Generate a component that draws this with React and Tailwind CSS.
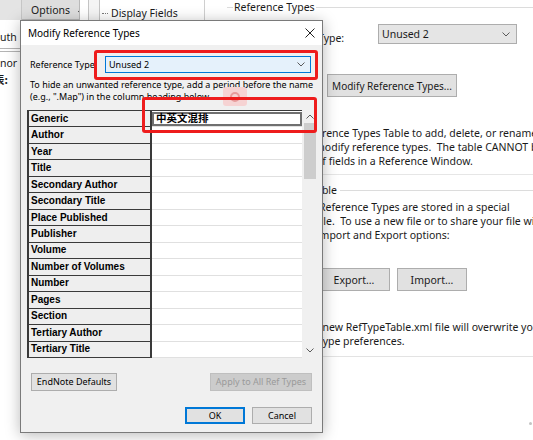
import React from 'react';

const fields = [
  'Generic', 'Author', 'Year', 'Title', 'Secondary Author', 'Secondary Title',
  'Place Published', 'Publisher', 'Volume', 'Number of Volumes', 'Number',
  'Pages', 'Section', 'Tertiary Author', 'Tertiary Title',
];

function Chevron({ up = false }) {
  return (
    <svg width="8" height="5" viewBox="0 0 8 5" className="shrink-0">
      <polyline
        points={up ? '0.5,4.5 4,1 7.5,4.5' : '0.5,0.5 4,4 7.5,0.5'}
        fill="none"
        stroke="#5a5a5a"
        strokeWidth="1"
      />
    </svg>
  );
}

function LeftPane() {
  return (
    <div className="w-[222px] shrink-0 flex flex-col">
      {/* toolbar strip above the dialog */}
      <div className="flex h-[20px]">
        <div className="w-[22px] bg-[#e4e4e4] border-r border-[#c6c6c6]" />
        <div className="w-[58px] h-[20px] bg-[#dedede] border-r border-b border-[#b9b9b9] flex items-center pl-[9px] pt-[3px] text-[10.5px]">
          <span>Options</span>
          <svg width="4" height="7" viewBox="0 0 4 7" className="ml-[8px]">
            <polygon points="0,0 4,3.5 0,7" fill="#111" />
          </svg>
        </div>
        <div className="w-[8px]" />
        <div className="w-[12px] border-x border-[#c4c4c4] bg-[#f4f4f4]" />
        <div className="w-[105px] flex items-center pl-[2px] pt-[6px] border-r border-[#cfcfcf]">
          <span className="w-[6px] border-t border-dotted border-[#7a7a7a]" />
          <span className="ml-[3px] text-[10.5px] leading-none">Display Fields</span>
        </div>
      </div>
      {/* bits of the page left of the dialog */}
      <div className="text-[10.5px] leading-[14px] whitespace-nowrap">
        <div className="mt-[10px]">uth</div>
        <div className="mt-[4px] w-[22px] h-[4px] border-y border-[#b4b4b4]" />
        <div className="mt-[4px]">nor</div>
        <div className="mt-[3px] -ml-[6px] font-bold font-['Noto_Sans_CJK_SC',sans-serif]">表:</div>
      </div>
    </div>
  );
}

function RightPane() {
  return (
    <div className="flex-1 flex flex-col text-[10.5px] leading-[14px] whitespace-pre overflow-hidden">
      {/* group box title */}
      <div className="flex items-center h-[14px] pl-[5px]">
        <span className="w-[6px] h-px bg-[#dcdcdc]" />
        <span className="px-[1px]">Reference Types</span>
        <span className="flex-1 h-px bg-[#dcdcdc]" />
      </div>

      <div className="flex items-start mt-[10px] pl-[96px] h-[20px]">
        <span className="w-[60px] mt-[7px]">Type:</span>
        <div className="w-[139px] h-[20px] bg-[#e5e5e5] border border-[#adadad] flex items-center justify-between pl-[3px] pr-[6px]">
          <span>Unused 2</span>
          <Chevron />
        </div>
      </div>

      <div className="ml-[105px] mt-[30px] w-[130px] h-[23px] bg-[#e1e1e1] border border-[#adadad] flex items-center justify-center text-[10px]">
        Modify Reference Types...
      </div>

      <div className="mt-[29px] flex flex-col">
        <div className="pl-[100px]">rence Types Table to add, delete, or rename reference</div>
        <div className="pl-[93px]">modify reference types.  The table CANNOT be used</div>
        <div className="pl-[94px]">of fields in a Reference Window.</div>
      </div>
      <div className="mt-[6px] ml-[100px] h-px bg-[#e6e6e6]" />

      <div className="mt-[8px] h-[14px] flex items-center pl-[89px]">
        <span>Table</span>
        <span className="ml-[3px] flex-1 h-px bg-[#dcdcdc]" />
      </div>

      <div className="mt-[3px] flex flex-col">
        <div className="pl-[97px]">Reference Types are stored in a special</div>
        <div className="pl-[95px]">file.  To use a new file or to share your file with</div>
        <div className="pl-[94px]">Import and Export options:</div>
      </div>

      <div className="mt-[26px] flex pl-[96px] gap-[7px]">
        <div className="w-[72px] h-[23px] bg-[#e1e1e1] border border-[#adadad] flex items-center justify-center">Export...</div>
        <div className="w-[70px] h-[23px] bg-[#e1e1e1] border border-[#adadad] flex items-center justify-center">Import...</div>
      </div>

      <div className="mt-[29px] flex flex-col">
        <div className="pl-[92px]">a new RefTypeTable.xml file will overwrite your</div>
        <div className="pl-[95px]">Type preferences.</div>
      </div>
      <div className="mt-[8px] ml-[100px] h-px bg-[#e3e3e3]" />
    </div>
  );
}

function FieldTable() {
  return (
    <div className="mt-[7px] flex w-[290px] h-[248px]">
      <div className="flex-1 flex flex-col border-t border-[#3a3a3a]">
        {fields.map((name, i) => (
          <div key={name} className="flex h-[16.5px]">
            <div className="w-[125px] shrink-0 bg-[#eeeeee] border-l-2 border-r-2 border-b border-[#3a3a3a] flex items-center pl-[2px] font-bold text-[10px] font-['Liberation_Sans',sans-serif] text-black">
              {name}
            </div>
            <div className="flex-1 bg-white border-b border-[#e0e0e0] flex items-center">
              {i === 0 && (
                <div className="w-full h-[14px] border-2 border-[#707070] bg-white flex items-center pl-[2px] text-[10.5px] font-bold font-['Noto_Sans_CJK_SC',sans-serif] leading-none">
                  中英文混排
                </div>
              )}
            </div>
          </div>
        ))}
      </div>
      {/* scrollbar */}
      <div className="w-[15px] flex flex-col items-center bg-[#f0f0f0]">
        <div className="h-[13px] flex items-center justify-center">
          <Chevron up />
        </div>
        <div className="w-[12px] h-[56px] bg-[#cdcdcd]" />
        <div className="flex-1" />
        <div className="h-[16px] flex items-center justify-center">
          <Chevron />
        </div>
      </div>
    </div>
  );
}

function ModifyDialog() {
  return (
    <div className="absolute left-[20px] top-[20px] w-[303px] h-[413px] border border-[#7a7a7a] bg-[#f0f0f0] shadow-[0_2px_14px_rgba(0,0,0,0.28)] flex flex-col text-[9px] leading-[12px] text-black whitespace-nowrap">
      <div className="h-[24px] shrink-0 bg-white flex items-center justify-between pl-[7px] pr-[7px]">
        <span className="text-[10px]">Modify Reference Types</span>
        <svg width="10" height="10" viewBox="0 0 10 10">
          <path d="M0.5 0.5 L9.5 9.5 M9.5 0.5 L0.5 9.5" stroke="#222" strokeWidth="1" />
        </svg>
      </div>

      <div className="flex flex-col pl-[6px]">
        <div className="flex items-center mt-[11px] ml-[3px] h-[17px]">
          <span className="w-[75px]">Reference Type</span>
          <div className="w-[206px] h-[17px] border border-[#0078d7] bg-[#e5f1fb] flex items-center justify-between pl-[3px] pr-[5px]">
            <span>Unused 2</span>
            <Chevron />
          </div>
        </div>

        <div className="mt-[6px] ml-[3px] flex flex-col">
          <div>To hide an unwanted reference type, add a period before the name</div>
          <div>(e.g., ".Map") in the column heading below.</div>
        </div>

        <FieldTable />

        <div className="mt-[15px] ml-[4px] w-[281px] flex justify-between">
          <div className="w-[86px] h-[18px] bg-[#e1e1e1] border border-[#adadad] flex items-center justify-center">EndNote Defaults</div>
          <div className="w-[102px] h-[18px] bg-[#cccccc] border border-[#bfbfbf] text-[#9a9a9a] flex items-center justify-center">Apply to All Ref Types</div>
        </div>

        <div className="mt-[16px] ml-[4px] w-[281px] flex justify-end gap-[7px]">
          <div className="w-[60px] h-[17px] bg-[#e1e1e1] border border-[#0078d7] shadow-[inset_0_0_0_1px_#0078d7] flex items-center justify-center">OK</div>
          <div className="w-[60px] h-[17px] bg-[#e1e1e1] border border-[#adadad] flex items-center justify-center">Cancel</div>
        </div>
      </div>
    </div>
  );
}

export default function App() {
  return (
    <div className="relative w-[533px] h-[440px] overflow-hidden bg-white text-[#1a1a1a] font-['Noto_Sans',sans-serif]">
      <div className="flex h-full">
        <LeftPane />
        <RightPane />
      </div>

      <ModifyDialog />

      {/* faint screenshot-tool marker */}
      <div className="absolute left-[223px] top-[87px] w-[24px] h-[19px] rounded-[3px] bg-[#f6d3d3] flex items-center justify-center">
        <svg width="12" height="12" viewBox="0 0 12 12">
          <circle cx="6" cy="6" r="4" fill="none" stroke="#e79b9b" strokeWidth="2" />
        </svg>
      </div>

      {/* red highlight boxes */}
      <div className="absolute left-[94px] top-[50px] w-[224px] h-[30px] border-[3px] border-[#ee1c1c] rounded-[3px]" />
      <div className="absolute left-[142px] top-[97px] w-[175px] h-[36px] border-[3px] border-[#ee1c1c] rounded-[3px]" />

      <div className="absolute left-[529px] top-[422px] w-[3px] h-[3px] rounded-full bg-[#c4c4c4]" />
    </div>
  );
}
